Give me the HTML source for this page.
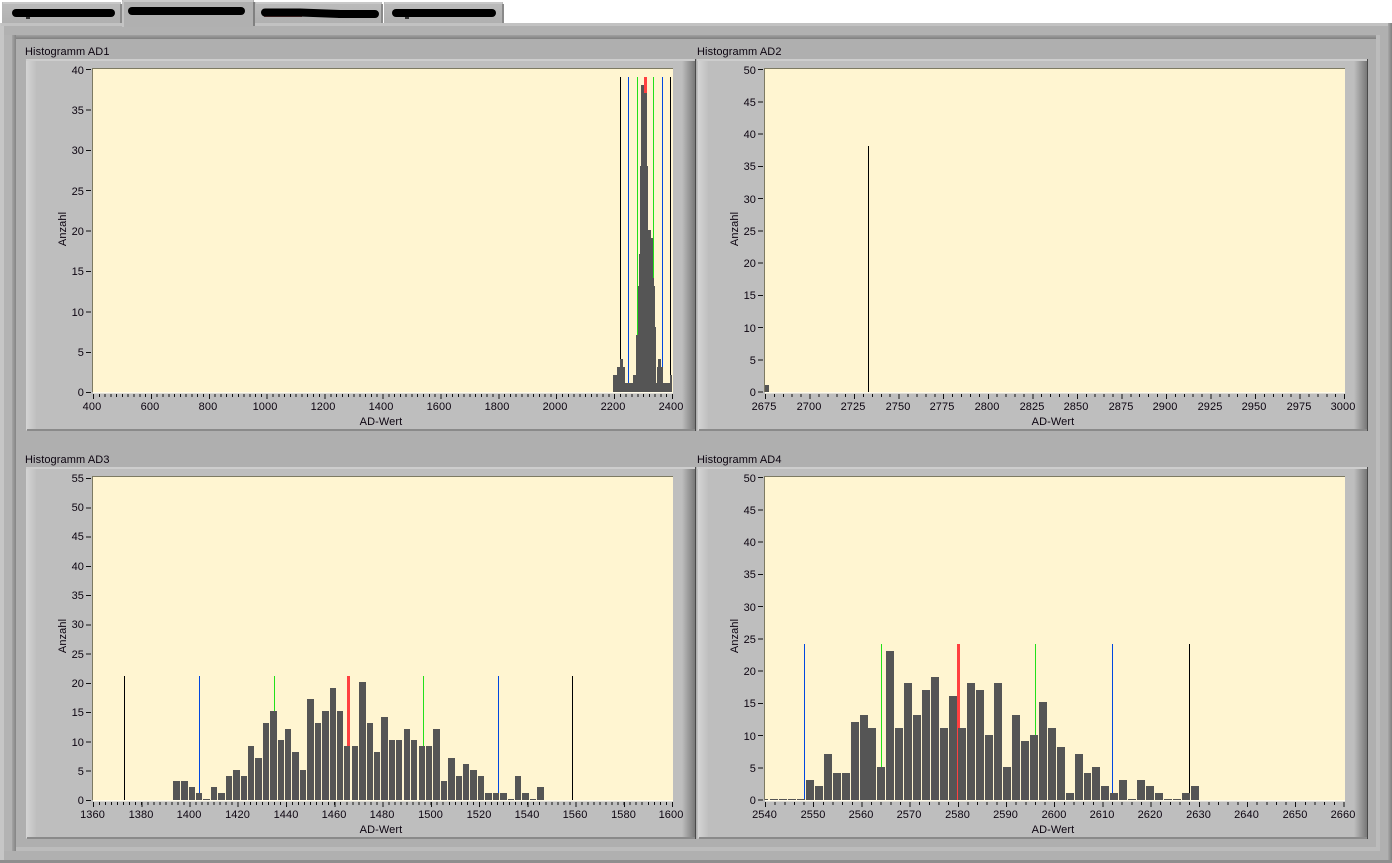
<!DOCTYPE html>
<html><head><meta charset="utf-8"><title>Histogramm</title>
<style>
html,body{margin:0;padding:0;background:#fff;width:1392px;height:863px;overflow:hidden}
svg{display:block}
text{font-family:"Liberation Sans",Arial,sans-serif;font-size:11px;fill:#0c0410;letter-spacing:.1px}
.m{text-anchor:middle}.e{text-anchor:end}
.mi{stroke:#111;fill:none;shape-rendering:crispEdges}
.bar{fill:#555;shape-rendering:crispEdges}
</style></head><body>
<svg width="1392" height="863" viewBox="0 0 1392 863" xmlns="http://www.w3.org/2000/svg">
<defs>
<linearGradient id="gl"><stop offset="0" stop-color="#d4d4d4"/><stop offset="1" stop-color="#c0c0c0"/></linearGradient>
<linearGradient id="gr"><stop offset="0" stop-color="#bebebe"/><stop offset="1" stop-color="#787878"/></linearGradient>
<linearGradient id="gf"><stop offset="0" stop-color="#a4a4a4"/><stop offset="1" stop-color="#848484"/></linearGradient>
<linearGradient id="gt" x1="0" y1="0" x2="0" y2="1"><stop offset="0" stop-color="#a0a0a0"/><stop offset="1" stop-color="#808080"/></linearGradient>
<linearGradient id="go"><stop offset="0" stop-color="#a8a8a8"/><stop offset="1" stop-color="#808080"/></linearGradient>
<linearGradient id="gtab" x1="0" y1="0" x2="0" y2="1"><stop offset="0" stop-color="#bcbcbc"/><stop offset="1" stop-color="#b0b0b0"/></linearGradient>
<g id="p" shape-rendering="crispEdges">
<rect width="671" height="372" fill="#bebebe"/>
<rect x="1" y="0" width="10" height="371" fill="url(#gl)"/>
<rect width="670" height="2" fill="#cdcdcd"/>
<rect x="657" y="2" width="13" height="369" fill="url(#gr)"/>
<rect x="670" y="0" width="1" height="372" fill="#4a4a4a"/>
<rect x="2" y="370" width="668" height="2" fill="#8a8a8a"/>
</g>
</defs>

<!-- frame -->
<g shape-rendering="crispEdges">
<rect x="0" y="23" width="1392" height="840" fill="#afafaf"/>
<rect x="0" y="23" width="4" height="840" fill="#c6c6c6"/>
<rect x="4" y="26" width="8" height="834" fill="#b3b3b3"/>
<rect x="1" y="23" width="1391" height="3" fill="#c2c2c2"/>
<rect x="4" y="26" width="1384" height="9" fill="#b1b1b1"/>
<rect x="1388" y="23" width="4" height="840" fill="url(#go)"/>
<rect x="0" y="860" width="1392" height="3" fill="#8e8e8e"/>
<rect x="4" y="851" width="1384" height="9" fill="#b0b0b0"/>
<rect x="1380" y="26" width="8" height="834" fill="#b0b0b0"/>
<rect x="12" y="847" width="1368" height="4" fill="#bcbcbc"/>
<rect x="1376" y="35" width="4" height="816" fill="#bcbcbc"/>
<rect x="12" y="35" width="1364" height="4" fill="url(#gt)"/>
<rect x="12" y="35" width="4" height="816" fill="url(#gf)"/>
</g>

<!-- tabs -->
<g shape-rendering="crispEdges">
<rect x="2" y="2" width="119" height="21" fill="url(#gtab)"/><rect x="3" y="2" width="117" height="2" fill="#c8c8c8"/><rect x="120" y="4" width="2" height="19" fill="#8a8a8a"/>
<rect x="255" y="2" width="127" height="21" fill="url(#gtab)"/><rect x="256" y="2" width="125" height="2" fill="#c8c8c8"/><rect x="381" y="4" width="2" height="19" fill="#8a8a8a"/>
<rect x="384" y="2" width="119" height="21" fill="url(#gtab)"/><rect x="385" y="2" width="117" height="2" fill="#c8c8c8"/><rect x="502" y="4" width="2" height="19" fill="#8a8a8a"/>
<rect x="122" y="0" width="132" height="27" fill="#b0b0b0"/><rect x="123" y="0" width="130" height="2" fill="#c8c8c8"/><rect x="122" y="1" width="2" height="26" fill="#c4c4c4"/><rect x="253" y="2" width="2" height="24" fill="#808080"/>
<rect x="26" y="16" width="4" height="3" fill="#333"/>
<rect x="405" y="16" width="4" height="3" fill="#333"/>
<rect x="264" y="15" width="38" height="2" fill="#6a3a3a"/>
<rect x="338" y="16" width="16" height="2" fill="#333"/>
</g>
<g stroke="#000" stroke-linecap="round" fill="none">
<path d="M16 13H111" stroke-width="8"/>
<path d="M132 11H241" stroke-width="8"/>
<path d="M265 12.5H300L340 14H375" stroke-width="8"/>
<path d="M396 13H492" stroke-width="8"/>
</g>

<!-- panels -->
<use href="#p" transform="translate(25,59)"/>
<use href="#p" transform="translate(697,59) "/>
<use href="#p" transform="translate(25,467) "/>
<use href="#p" transform="translate(697,467) "/>
<rect x="25" y="59" width="1" height="372" fill="#afafaf" shape-rendering="crispEdges"/>
<rect x="25" y="467" width="1" height="372" fill="#afafaf" shape-rendering="crispEdges"/>

<text x="25" y="55">Histogramm AD1</text>
<text x="697" y="55">Histogramm AD2</text>
<text x="25" y="463">Histogramm AD3</text>
<text x="697" y="463">Histogramm AD4</text>

<!-- plot areas -->
<g shape-rendering="crispEdges">
<rect x="92" y="68" width="581" height="324" fill="#7d7a62"/><rect x="93" y="69" width="580" height="323" fill="#fff5d1"/><rect x="93" y="392" width="580" height="1.5" fill="#fffbe9"/>
<rect x="764" y="68" width="581" height="324" fill="#7d7a62"/><rect x="765" y="69" width="580" height="323" fill="#fff5d1"/><rect x="765" y="392" width="580" height="1.5" fill="#fffbe9"/>
<rect x="92" y="476" width="581" height="324" fill="#7d7a62"/><rect x="93" y="477" width="580" height="323" fill="#fff5d1"/><rect x="93" y="800" width="580" height="1.5" fill="#fffbe9"/>
<rect x="764" y="476" width="581" height="324" fill="#7d7a62"/><rect x="765" y="477" width="580" height="323" fill="#fff5d1"/><rect x="765" y="800" width="580" height="1.5" fill="#fffbe9"/>
</g>

<!-- markers -->
<g shape-rendering="crispEdges">
<rect x="620" y="77" width="1" height="315" fill="#000"/><rect x="628" y="77" width="1" height="315" fill="#0047e0"/><rect x="637" y="77" width="1" height="315" fill="#22e01a"/><rect x="644" y="77" width="3" height="315" fill="#ff4040"/><rect x="653" y="77" width="1" height="315" fill="#22e01a"/><rect x="662" y="77" width="1" height="315" fill="#0047e0"/><rect x="670" y="77" width="1" height="315" fill="#000"/>
<rect x="868" y="146" width="1" height="246" fill="#000"/>
<rect x="124" y="676" width="1" height="124" fill="#000"/><rect x="199" y="676" width="1" height="124" fill="#0047e0"/><rect x="274" y="676" width="1" height="124" fill="#22e01a"/><rect x="347" y="676" width="3" height="124" fill="#ff4040"/><rect x="423" y="676" width="1" height="124" fill="#22e01a"/><rect x="498" y="676" width="1" height="124" fill="#0047e0"/><rect x="572" y="676" width="1" height="124" fill="#000"/>
<rect x="804" y="644" width="1" height="156" fill="#0047e0"/><rect x="881" y="644" width="1" height="156" fill="#22e01a"/><rect x="957" y="644" width="3" height="156" fill="#ff4040"/><rect x="1035" y="644" width="1" height="156" fill="#22e01a"/><rect x="1112" y="644" width="1" height="156" fill="#0047e0"/><rect x="1189" y="644" width="1" height="156" fill="#000"/>
</g>

<!-- bars -->
<path class="bar" d="M613 392V375H617V367H620V359H623V367H625V383H633V375H636V335H638V286H639V254H640V166H641V85H644V93H647V166H648V230H651V238H653V278H654V286H655V327H656V383H657V367H658V359H661V367H663V383H670V375H672V392Z"/>
<path class="bar" d="M765 385h4V392h-4z"/>
<path class="bar" d="M173 781h7V800h-7zM181 781h7V800h-7zM189 787h6V800h-6zM196 793h6V800h-6zM203 799h7V800h-7zM211 787h6V800h-6zM218 793h7V800h-7zM226 776h6V800h-6zM233 770h7V800h-7zM241 776h6V800h-6zM248 746h6V800h-6zM255 758h7V800h-7zM263 723h6V800h-6zM270 711h7V800h-7zM278 740h6V800h-6zM285 729h6V800h-6zM292 752h7V800h-7zM300 770h6V800h-6zM307 699h7V800h-7zM315 723h6V800h-6zM322 711h7V800h-7zM330 688h6V800h-6zM337 711h6V800h-6zM344 746h6V800h-6zM352 746h6V800h-6zM359 682h7V800h-7zM367 723h6V800h-6zM374 752h6V800h-6zM381 717h7V800h-7zM389 740h6V800h-6zM396 740h6V800h-6zM404 729h6V800h-6zM411 740h6V800h-6zM419 746h6V800h-6zM426 746h6V800h-6zM433 729h7V800h-7zM441 781h6V800h-6zM448 758h7V800h-7zM456 776h6V800h-6zM463 764h6V800h-6zM470 770h7V800h-7zM478 776h6V800h-6zM485 793h7V800h-7zM493 793h6V800h-6zM500 793h7V800h-7zM508 799h6V800h-6zM515 776h6V800h-6zM522 793h7V800h-7zM530 799h6V800h-6zM537 787h7V800h-7z"/>
<path class="bar" d="M765 799h3V800h-3zM770 799h8V800h-8zM779 799h8V800h-8zM788 799h8V800h-8zM797 799h8V800h-8zM806 780h8V800h-8zM815 786h8V800h-8zM824 754h8V800h-8zM833 773h8V800h-8zM842 773h8V800h-8zM851 722h8V800h-8zM860 715h8V800h-8zM868 728h8V800h-8zM877 767h8V800h-8zM886 651h8V800h-8zM895 728h8V800h-8zM904 683h8V800h-8zM913 715h8V800h-8zM922 690h8V800h-8zM931 677h8V800h-8zM940 728h8V800h-8zM949 696h8V800h-8zM958 728h8V800h-8zM967 683h8V800h-8zM976 690h8V800h-8zM985 735h8V800h-8zM994 683h8V800h-8zM1003 767h8V800h-8zM1012 715h8V800h-8zM1021 741h8V800h-8zM1030 735h8V800h-8zM1039 702h8V800h-8zM1048 728h8V800h-8zM1057 747h8V800h-8zM1066 793h8V800h-8zM1075 754h8V800h-8zM1084 773h7V800h-7zM1092 767h8V800h-8zM1101 786h8V800h-8zM1110 793h8V800h-8zM1119 780h8V800h-8zM1128 799h8V800h-8zM1137 780h8V800h-8zM1146 786h8V800h-8zM1155 793h8V800h-8zM1164 799h8V800h-8zM1173 799h8V800h-8zM1182 793h8V800h-8zM1191 786h8V800h-8z"/>

<!-- x ticks -->
<g class="mi">
<line x1="93" x2="673" y1="395.5" y2="395.5" stroke-width="3" stroke-dasharray="1 4.79"/>
<line x1="93" x2="673" y1="396.5" y2="396.5" stroke-width="5" stroke-dasharray="1 56.9"/>
<line x1="765" x2="1345" y1="395.5" y2="395.5" stroke-width="3" stroke-dasharray="1 7.91"/>
<line x1="765" x2="1345" y1="396.5" y2="396.5" stroke-width="5" stroke-dasharray="1 43.55"/>
<line x1="93" x2="673" y1="803.5" y2="803.5" stroke-width="3" stroke-dasharray="1 5.03"/>
<line x1="93" x2="673" y1="804.5" y2="804.5" stroke-width="5" stroke-dasharray="1 47.25"/>
<line x1="765" x2="1345" y1="803.5" y2="803.5" stroke-width="3" stroke-dasharray="1 8.64"/>
<line x1="765" x2="1345" y1="804.5" y2="804.5" stroke-width="5" stroke-dasharray="1 47.2"/>
<!-- y ticks -->
<line x1="88.5" x2="88.5" y1="69" y2="393" stroke-width="5" stroke-dasharray="1 39.4"/>
<line x1="760.5" x2="760.5" y1="69" y2="393" stroke-width="5" stroke-dasharray="1 31.25"/>
<line x1="88.5" x2="88.5" y1="478" y2="801" stroke-width="5" stroke-dasharray="1 28.27"/>
<line x1="760.5" x2="760.5" y1="477" y2="801" stroke-width="5" stroke-dasharray="1 31.25"/>
</g>

<!-- y labels -->
<g class="e">
<text x="84" y="74">40</text><text x="84" y="114">35</text><text x="84" y="154">30</text><text x="84" y="195">25</text><text x="84" y="235">20</text><text x="84" y="275">15</text><text x="84" y="316">10</text><text x="84" y="356">5</text><text x="84" y="396">0</text>
<text x="756" y="74">50</text><text x="756" y="106">45</text><text x="756" y="138">40</text><text x="756" y="170">35</text><text x="756" y="203">30</text><text x="756" y="235">25</text><text x="756" y="267">20</text><text x="756" y="299">15</text><text x="756" y="332">10</text><text x="756" y="364">5</text><text x="756" y="396">0</text>
<text x="84" y="482">55</text><text x="84" y="511">50</text><text x="84" y="540">45</text><text x="84" y="570">40</text><text x="84" y="599">35</text><text x="84" y="628">30</text><text x="84" y="658">25</text><text x="84" y="687">20</text><text x="84" y="716">15</text><text x="84" y="746">10</text><text x="84" y="775">5</text><text x="84" y="804">0</text>
<text x="756" y="482">50</text><text x="756" y="514">45</text><text x="756" y="546">40</text><text x="756" y="578">35</text><text x="756" y="611">30</text><text x="756" y="643">25</text><text x="756" y="675">20</text><text x="756" y="707">15</text><text x="756" y="740">10</text><text x="756" y="772">5</text><text x="756" y="804">0</text>
</g>

<!-- x labels -->
<g class="m">
<text x="92" y="410">400</text><text x="150" y="410">600</text><text x="208" y="410">800</text><text x="265" y="410">1000</text><text x="323" y="410">1200</text><text x="381" y="410">1400</text><text x="439" y="410">1600</text><text x="497" y="410">1800</text><text x="555" y="410">2000</text><text x="613" y="410">2200</text><text x="671" y="410">2400</text>
<text x="764" y="410">2675</text><text x="809" y="410">2700</text><text x="853" y="410">2725</text><text x="898" y="410">2750</text><text x="942" y="410">2775</text><text x="987" y="410">2800</text><text x="1032" y="410">2825</text><text x="1076" y="410">2850</text><text x="1121" y="410">2875</text><text x="1165" y="410">2900</text><text x="1210" y="410">2925</text><text x="1254" y="410">2950</text><text x="1299" y="410">2975</text><text x="1343" y="410">3000</text>
<text x="92.5" y="818">1360</text><text x="141" y="818">1380</text><text x="189" y="818">1400</text><text x="237.5" y="818">1420</text><text x="286" y="818">1440</text><text x="334" y="818">1460</text><text x="382" y="818">1480</text><text x="430.5" y="818">1500</text><text x="479" y="818">1520</text><text x="527" y="818">1540</text><text x="575" y="818">1560</text><text x="623.5" y="818">1580</text><text x="671" y="818">1600</text>
<text x="764.5" y="818">2540</text><text x="813" y="818">2550</text><text x="861" y="818">2560</text><text x="909" y="818">2570</text><text x="957.5" y="818">2580</text><text x="1005.5" y="818">2590</text><text x="1054" y="818">2600</text><text x="1102" y="818">2610</text><text x="1150" y="818">2620</text><text x="1198.5" y="818">2630</text><text x="1246.5" y="818">2640</text><text x="1295" y="818">2650</text><text x="1343" y="818">2660</text>
<text x="381" y="425">AD-Wert</text><text x="1053" y="425">AD-Wert</text><text x="381" y="833">AD-Wert</text><text x="1053" y="833">AD-Wert</text>
<text transform="translate(66,229) rotate(-90)">Anzahl</text>
<text transform="translate(738,229) rotate(-90)">Anzahl</text>
<text transform="translate(66,636) rotate(-90)">Anzahl</text>
<text transform="translate(738,636) rotate(-90)">Anzahl</text>
</g>
</svg>
</body></html>
